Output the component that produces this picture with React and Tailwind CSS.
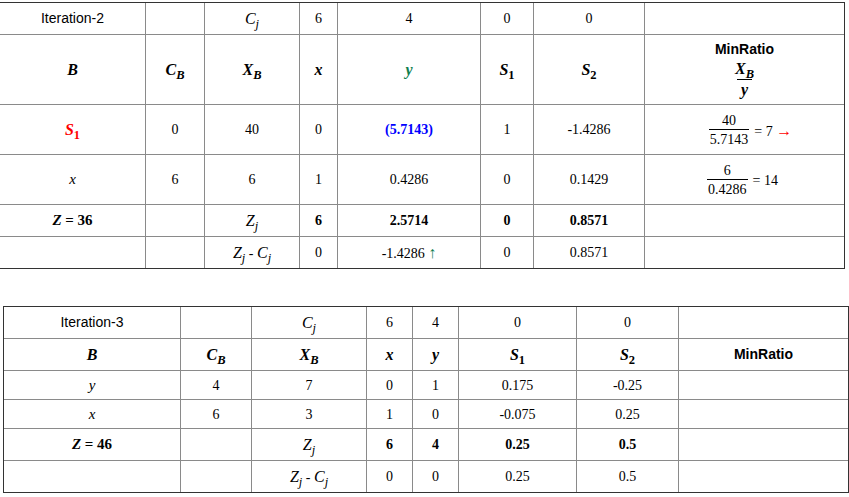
const serif = '"Liberation Serif", "Times New Roman", serif';
const sans = '"Liberation Sans", Arial, sans-serif';

// base letter with a subscript; digits in the subscript stay upright
const Sub = ({ base, sub, bold, big }) => (
    <span className={`${bold ? 'font-bold' : ''} ${big ? 'text-[16px]' : ''}`} style={{ fontFamily: serif }}>
        <i>{base}</i>
        <sub className={`text-[78%] bottom-[-0.35em] ${/\d/.test(sub) ? '' : 'italic'}`}>{sub}</sub>
    </span>
);

const Frac = ({ top, bottom }) => (
    <span className="inline-flex flex-col items-center align-middle">
        <span className="leading-[17px]">{top}</span>
        <span className="border-t border-black leading-[19px] px-[1px]">{bottom}</span>
    </span>
);

// one table: rows of cells, cols = widths, heights = row heights
const Tableau = ({ cols, heights, rows, className, noLeft }) => (
    <div className={`border-[#333] border-t border-r border-b ${noLeft ? '' : 'border-l'} ${className}`}>
        <table className="table-fixed border-separate border-spacing-0 text-[14px] text-black" style={{ fontFamily: serif }}>
            <colgroup>
                {cols.map((w, i) => (
                    <col key={i} style={{ width: w }} />
                ))}
            </colgroup>
            <tbody>
                {rows.map((row, r) => (
                    <tr key={r} style={{ height: heights[r] }}>
                        {row.map((cell, c) => (
                            <td
                                key={c}
                                className={`p-0 text-center align-middle border-[#8a8a8a] ${c < row.length - 1 ? 'border-r' : ''} ${r < rows.length - 1 ? 'border-b' : ''}`}
                            >
                                {cell}
                            </td>
                        ))}
                    </tr>
                ))}
            </tbody>
        </table>
    </div>
);

const Arial = ({ children, bold }) => (
    <span className={bold ? 'font-bold' : ''} style={{ fontFamily: sans }}>{children}</span>
);

const BI = ({ children }) => <span className="font-bold italic text-[16px]">{children}</span>;
const I = ({ children }) => <span className="italic text-[15px]">{children}</span>;

export default function App() {
    const top = [
        [<Arial>Iteration-2</Arial>, '', <Sub base="C" sub="j" big />, '6', '4', '0', '0', ''],
        [
            <BI>B</BI>,
            <Sub base="C" sub="B" bold big />,
            <Sub base="X" sub="B" bold big />,
            <BI>x</BI>,
            <span className="font-bold italic text-[16px] text-[#108050]">y</span>,
            <Sub base="S" sub="1" bold big />,
            <Sub base="S" sub="2" bold big />,
            <div className="flex flex-col items-center">
                <Arial bold>MinRatio</Arial>
                <span className="inline-flex flex-col items-center">
                    <span className="leading-[18px]"><Sub base="X" sub="B" bold big /></span>
                    <span className="border-t border-black px-[4px] leading-[20px] font-bold italic text-[16px]">y</span>
                </span>
            </div>,
        ],
        [
            <span className="text-[#ff0000]"><Sub base="S" sub="1" bold big /></span>,
            '0',
            '40',
            '0',
            <span className="font-bold text-[#0000ff]">(5.7143)</span>,
            '1',
            '-1.4286',
            <span className="inline-flex items-center gap-[5px] pl-[12px]">
                <Frac top="40" bottom="5.7143" />
                <span>= 7 <span className="text-[#ff0000] text-[16px]">→</span></span>
            </span>,
        ],
        [
            <I>x</I>,
            '6',
            '6',
            '1',
            '0.4286',
            '0',
            '0.1429',
            <span className="inline-flex items-center gap-[5px] pr-[4px]">
                <Frac top="6" bottom="0.4286" />
                <span>= 14</span>
            </span>,
        ],
        [
            <span className="font-bold text-[15px]"><i>Z</i> = 36</span>,
            '',
            <Sub base="Z" sub="j" big />,
            <b>6</b>,
            <b>2.5714</b>,
            <b>0</b>,
            <b>0.8571</b>,
            '',
        ],
        [
            '',
            '',
            <span><Sub base="Z" sub="j" big /> - <Sub base="C" sub="j" big /></span>,
            '0',
            <span>-1.4286 <span className="text-[#108050] text-[16px]">↑</span></span>,
            '0',
            '0.8571',
            '',
        ],
    ];

    const bottom = [
        [<Arial>Iteration-3</Arial>, '', <Sub base="C" sub="j" big />, '6', '4', '0', '0', ''],
        [
            <BI>B</BI>,
            <Sub base="C" sub="B" bold big />,
            <Sub base="X" sub="B" bold big />,
            <BI>x</BI>,
            <BI>y</BI>,
            <Sub base="S" sub="1" bold big />,
            <Sub base="S" sub="2" bold big />,
            <Arial bold>MinRatio</Arial>,
        ],
        [<I>y</I>, '4', '7', '0', '1', '0.175', '-0.25', ''],
        [<I>x</I>, '6', '3', '1', '0', '-0.075', '0.25', ''],
        [
            <span className="font-bold text-[15px]"><i>Z</i> = 46</span>,
            '',
            <Sub base="Z" sub="j" big />,
            <b>6</b>,
            <b>4</b>,
            <b>0.25</b>,
            <b>0.5</b>,
            '',
        ],
        [
            '',
            '',
            <span><Sub base="Z" sub="j" big /> - <Sub base="C" sub="j" big /></span>,
            '0',
            '0',
            '0.25',
            '0.5',
            '',
        ],
    ];

    return (
        <div className="bg-white w-[849px] h-[497px] overflow-hidden pt-[2px]">
            <Tableau
                noLeft
                className="w-[845px]"
                cols={[146, 59, 95, 38, 143, 53, 111, 199]}
                heights={[32, 70, 50, 50, 32, 31]}
                rows={top}
            />
            <Tableau
                className="w-[846px] ml-[3px] mt-[37px]"
                cols={[177, 71, 115, 46, 46, 118, 102, 169]}
                heights={[32, 32, 29, 29, 32, 31]}
                rows={bottom}
            />
        </div>
    );
}
